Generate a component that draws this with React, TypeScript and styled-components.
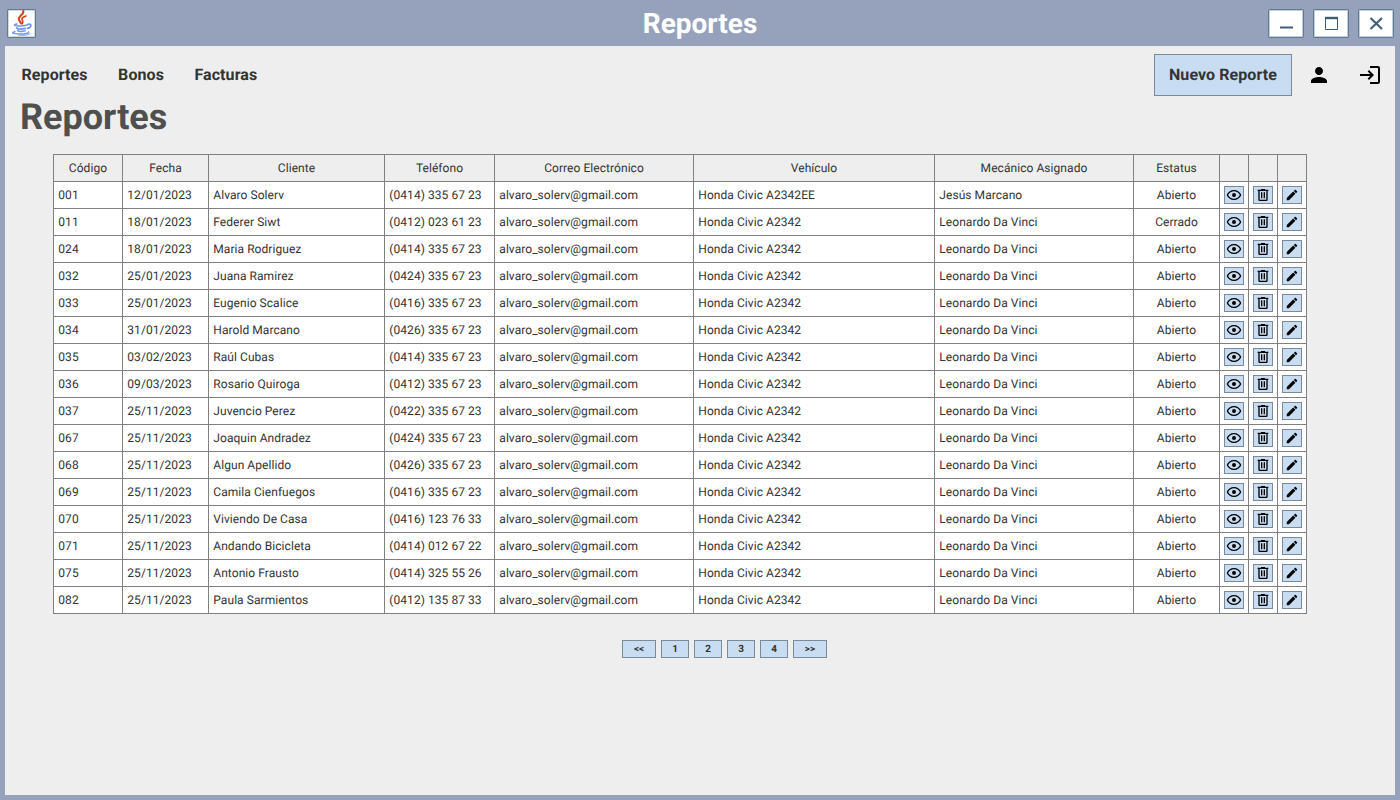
import React from "react";
import styled, { createGlobalStyle } from "styled-components";

const GlobalStyle = createGlobalStyle`
  * { box-sizing: border-box; }
  body { margin: 0; font-family: Roboto, "Liberation Sans", sans-serif; color: #333; text-rendering: geometricPrecision; }
  button { font-family: inherit; color: inherit; text-rendering: inherit; }
`;

const Window = styled.div`
  width: 1400px;
  height: 800px;
  padding: 0 5px 5px;
  background: #96a2bc;
  display: flex;
  flex-direction: column;
`;

const TitleBar = styled.header`
  height: 46px;
  flex: none;
  display: grid;
  grid-template-columns: 1fr auto 1fr;
  align-items: center;
  padding: 1px 1px 0 2px;
`;

const AppIcon = styled.div`
  width: 29px;
  height: 29px;
  background: #fff;
  border: 1px solid #5f7b93;
  border-radius: 1px;
  box-shadow: inset 0 0 0 0.5px #a9b8c6;
  display: flex;
  align-items: center;
  justify-content: center;
`;

const WindowTitle = styled.div`
  padding-right: 1px;
  font-size: 28px;
  font-weight: 700;
  color: #fff;
  line-height: 32px;
`;

const WindowControls = styled.div`
  display: flex;
  gap: 9px;
  justify-content: flex-end;
`;

const ControlButton = styled.button`
  width: 36px;
  height: 29px;
  padding: 0;
  background: #fff;
  border: 1px solid #5f7b93;
  border-radius: 1px;
  box-shadow: inset 0 0 0 1px #c3ced8;
  display: flex;
  align-items: center;
  justify-content: center;
`;

const Content = styled.main`
  flex: 1;
  background: #eee;
  display: flex;
  flex-direction: column;
`;

const NavBar = styled.nav`
  height: 42px;
  margin: 8px 13px 0 16.5px;
  display: flex;
  align-items: center;
  gap: 30.5px;
`;

const NavLink = styled.a`
  padding-bottom: 1px;
  font-size: 16px;
  font-weight: 700;
  letter-spacing: 0.08px;
`;

const NavActions = styled.div`
  margin-left: auto;
  display: flex;
  align-items: center;
`;

const PrimaryButton = styled.button`
  width: 138px;
  height: 42px;
  padding: 0 0 1px;
  background: #c8ddf2;
  border: 1px solid #7a8a99;
  font-size: 16px;
  font-weight: 700;
  letter-spacing: 0.08px;
`;

const IconLink = styled.span<{ $gap: number }>`
  display: flex;
  margin-left: ${(p) => p.$gap}px;
`;

const PageTitle = styled.h1`
  margin: 0 0 0 15px;
  font-size: 36px;
  line-height: 42px;
  font-weight: 700;
  color: #4f4f4f;
`;

const Table = styled.div`
  width: 1254px;
  margin: 16px 0 0 48px;
  border-top: 1px solid #808080;
  border-left: 1px solid #808080;
`;

const Row = styled.div<{ $head?: boolean }>`
  height: 27px;
  display: grid;
  grid-template-columns: 69px 86px 176px 110px 199px 241px 199px 86px 29px 29px 29px;
  background: ${(p) => (p.$head ? "#eee" : "#fff")};
`;

const Cell = styled.div<{ $center?: boolean }>`
  display: flex;
  align-items: center;
  justify-content: ${(p) => (p.$center ? "center" : "flex-start")};
  padding: ${(p) => (p.$center ? "0" : "0 0 0 4.3px")};
  border-right: 1px solid #808080;
  border-bottom: 1px solid #808080;
  font-size: 12px;
  letter-spacing: 0.06px;
  white-space: nowrap;
`;

const IconButton = styled.button`
  width: 20px;
  height: 18px;
  padding: 0;
  background: #c8ddf2;
  border: 1px solid #7a8a99;
  display: flex;
  align-items: center;
  justify-content: center;
`;

const Pagination = styled.div`
  display: flex;
  gap: 5px;
  margin: 26px 0 0 617px;
`;

const PageButton = styled.button<{ $wide?: boolean }>`
  width: ${(p) => (p.$wide ? 34 : 28)}px;
  height: 18px;
  padding: 1px 0 0;
  background: #c8ddf2;
  border: 1px solid #7a8a99;
  font-size: 10px;
  line-height: 13px;
  font-weight: 700;
`;

const PERSON = "M12 12c2.21 0 4-1.79 4-4s-1.79-4-4-4-4 1.79-4 4 1.79 4 4 4zm0 2c-2.67 0-8 1.34-8 4v2h16v-2c0-2.66-5.33-4-8-4z";
const LOGIN = "M11 7L9.6 8.4l2.6 2.6H2v2h10.2l-2.6 2.6L11 17l5-5-5-5zm9 12h-8v2h8c1.1 0 2-.9 2-2V5c0-1.1-.9-2-2-2h-8v2h8v14z";
const EYE = "M12,9A3,3 0 0,1 15,12A3,3 0 0,1 12,15A3,3 0 0,1 9,12A3,3 0 0,1 12,9M12,4.5C17,4.5 21.27,7.61 23,12C21.27,16.39 17,19.5 12,19.5C7,19.5 2.73,16.39 1,12C2.73,7.61 7,4.5 12,4.5M3.18,12C4.83,15.36 8.24,17.5 12,17.5C15.76,17.5 19.17,15.36 20.82,12C19.17,8.64 15.76,6.5 12,6.5C8.24,6.5 4.83,8.64 3.18,12Z";
const TRASH = "M9,3V4H4V6H5V19A2,2 0 0,0 7,21H17A2,2 0 0,0 19,19V6H20V4H15V3H9M7,6H17V19H7V6M9,8V17H11V8H9M13,8V17H15V8H13Z";
const PENCIL = "M20.71,7.04C21.1,6.65 21.1,6 20.71,5.63L18.37,3.29C18,2.9 17.35,2.9 16.96,3.29L15.12,5.12L18.87,8.87M3,17.25V21H6.75L17.81,9.93L14.06,6.18L3,17.25Z";

const ROW_ICONS = [
  { d: EYE, size: 16 },
  { d: TRASH, size: 16 },
  { d: PENCIL, size: 14 },
];

const Glyph = ({ d, size = 24 }: { d: string; size?: number }) => (
  <svg width={size} height={size} viewBox="0 0 24 24" fill="#000"><path d={d} /></svg>
);

const JavaLogo = () => (
  <svg width="27" height="27" viewBox="0 0 27 27" fill="none" strokeLinecap="round">
    <path d="M15.2 1C16.6 4.4 10.4 5.8 10.8 9.2C11 10.8 12.6 11.8 13.2 13.4" stroke="#dc3c1a" strokeWidth="2.1" />
    <path d="M17.8 6C15 7 13.6 8.2 14 9.6C14.4 10.8 16 11.6 14.2 13.6" stroke="#dc3c1a" strokeWidth="1.7" />
    <path d="M8.8 14C5.2 14.8 5.6 15.8 9.6 16C13 16.2 17 15.8 19 15" stroke="#7098ee" strokeWidth="1.6" />
    <path d="M19.8 14.4C24.2 13.2 23.6 17.4 19.6 18.4" stroke="#7098ee" strokeWidth="1.7" />
    <path d="M8.8 17.8C8.2 19.2 14 19.4 17.6 18.4" stroke="#7098ee" strokeWidth="1.7" />
    <path d="M9.8 20.4C9.6 21.6 14 21.8 17 20.8" stroke="#7098ee" strokeWidth="1.6" />
    <path d="M6.8 21.6C2.4 22.8 5.2 23.8 11.6 24C17 24.1 21.4 23.2 20.4 22" stroke="#7098ee" strokeWidth="1.5" />
    <path d="M10.6 25.4C16 25.7 21.4 25.1 22.4 23.6" stroke="#8cabf0" strokeWidth="1" />
  </svg>
);

const HEADERS = ["Código", "Fecha", "Cliente", "Teléfono", "Correo Electrónico", "Vehículo", "Mecánico Asignado", "Estatus", "", "", ""];

const REPORTS: [string, string, string, string][] = [
  ["001", "12/01/2023", "Alvaro Solerv", "(0414) 335 67 23"],
  ["011", "18/01/2023", "Federer Siwt", "(0412) 023 61 23"],
  ["024", "18/01/2023", "Maria Rodriguez", "(0414) 335 67 23"],
  ["032", "25/01/2023", "Juana Ramirez", "(0424) 335 67 23"],
  ["033", "25/01/2023", "Eugenio Scalice", "(0416) 335 67 23"],
  ["034", "31/01/2023", "Harold Marcano", "(0426) 335 67 23"],
  ["035", "03/02/2023", "Raúl Cubas", "(0414) 335 67 23"],
  ["036", "09/03/2023", "Rosario Quiroga", "(0412) 335 67 23"],
  ["037", "25/11/2023", "Juvencio Perez", "(0422) 335 67 23"],
  ["067", "25/11/2023", "Joaquin Andradez", "(0424) 335 67 23"],
  ["068", "25/11/2023", "Algun Apellido", "(0426) 335 67 23"],
  ["069", "25/11/2023", "Camila Cienfuegos", "(0416) 335 67 23"],
  ["070", "25/11/2023", "Viviendo De Casa", "(0416) 123 76 33"],
  ["071", "25/11/2023", "Andando Bicicleta", "(0414) 012 67 22"],
  ["075", "25/11/2023", "Antonio Frausto", "(0414) 325 55 26"],
  ["082", "25/11/2023", "Paula Sarmientos", "(0412) 135 87 33"],
];

export default function App() {
  return (
    <Window>
      <GlobalStyle />
      <TitleBar>
        <AppIcon><JavaLogo /></AppIcon>
        <WindowTitle>Reportes</WindowTitle>
        <WindowControls>
          <ControlButton>
            <svg width="34" height="27" viewBox="0 0 34 27"><path d="M11 17.5h13" stroke="#3f5d75" strokeWidth="2" /></svg>
          </ControlButton>
          <ControlButton>
            <svg width="34" height="27" viewBox="0 0 34 27" fill="none" stroke="#3f5d75">
              <path d="M11.5 8v11.5h12V8" />
              <path d="M11 8h13" strokeWidth="2.4" />
            </svg>
          </ControlButton>
          <ControlButton>
            <svg width="34" height="27" viewBox="0 0 34 27"><path d="M11.5 8l11.5 11M23 8l-11.5 11" stroke="#3f5d75" strokeWidth="2.1" /></svg>
          </ControlButton>
        </WindowControls>
      </TitleBar>
      <Content>
        <NavBar>
          <NavLink>Reportes</NavLink>
          <NavLink>Bonos</NavLink>
          <NavLink>Facturas</NavLink>
          <NavActions>
            <PrimaryButton>Nuevo Reporte</PrimaryButton>
            <IconLink $gap={15}><Glyph d={PERSON} /></IconLink>
            <IconLink $gap={27}><Glyph d={LOGIN} /></IconLink>
          </NavActions>
        </NavBar>
        <PageTitle>Reportes</PageTitle>
        <Table>
          <Row $head>
            {HEADERS.map((h, i) => <Cell key={i} $center>{h}</Cell>)}
          </Row>
          {REPORTS.map(([code, date, client, phone], i) => (
            <Row key={code}>
              <Cell>{code}</Cell>
              <Cell>{date}</Cell>
              <Cell>{client}</Cell>
              <Cell>{phone}</Cell>
              <Cell>alvaro_solerv@gmail.com</Cell>
              <Cell>{i === 0 ? "Honda Civic A2342EE" : "Honda Civic A2342"}</Cell>
              <Cell>{i === 0 ? "Jesús Marcano" : "Leonardo Da Vinci"}</Cell>
              <Cell $center>{i === 1 ? "Cerrado" : "Abierto"}</Cell>
              {ROW_ICONS.map(({ d, size }) => (
                <Cell key={d} $center><IconButton><Glyph d={d} size={size} /></IconButton></Cell>
              ))}
            </Row>
          ))}
        </Table>
        <Pagination>
          <PageButton $wide>&lt;&lt;</PageButton>
          {[1, 2, 3, 4].map((n) => <PageButton key={n}>{n}</PageButton>)}
          <PageButton $wide>&gt;&gt;</PageButton>
        </Pagination>
      </Content>
    </Window>
  );
}
